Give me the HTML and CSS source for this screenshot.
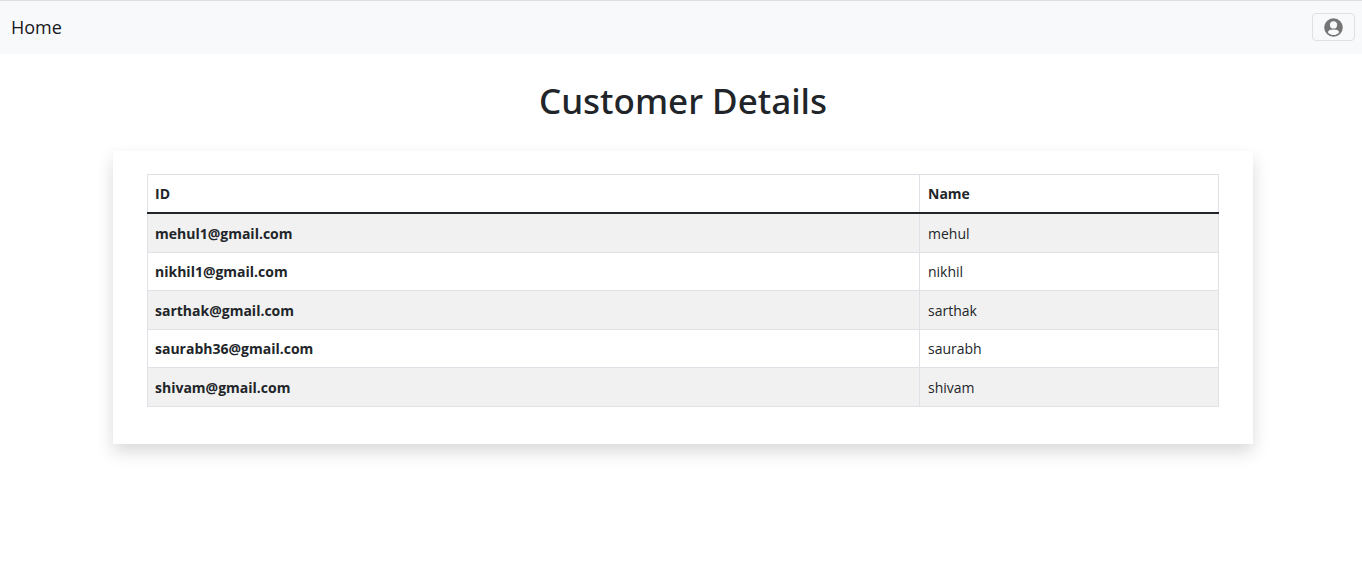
FILE: index.html
```html
<!DOCTYPE html>
<html lang="en">
<head>
  <meta charset="utf-8">
  <meta name="viewport" content="width=device-width, initial-scale=1">
  <title>Customer Details</title>
  <link rel="stylesheet" href="styles.css">
</head>
<body>
  <nav class="navbar">
    <a class="navbar-brand" href="#">Home</a>
    <button class="account-button" type="button" aria-label="Account">
      <svg class="account-icon" viewBox="0 0 20 20" aria-hidden="true">
        <circle cx="10" cy="10" r="9.800" fill="#757575"/>
        <circle cx="10" cy="7.300" r="3.800" fill="#f8f9fb"/>
        <path d="M4 15c.7-2.300 2.300-3 6-3s5.300.7 6 3c-1.400 1.900-3.500 3-6 3s-4.600-1.100-6-3z" fill="#f8f9fb"/>
      </svg>
    </button>
  </nav>
  <main class="page">
    <div class="container">
      <h1 class="title">Customer Details</h1>
      <section class="card">
        <table class="table">
          <thead>
            <tr><th scope="col">ID</th><th class="name-column" scope="col">Name</th></tr>
          </thead>
          <tbody>
            <tr><th scope="row">mehul1@gmail.com</th><td>mehul</td></tr>
            <tr><th scope="row">nikhil1@gmail.com</th><td>nikhil</td></tr>
            <tr><th scope="row">sarthak@gmail.com</th><td>sarthak</td></tr>
            <tr><th scope="row">saurabh36@gmail.com</th><td>saurabh</td></tr>
            <tr><th scope="row">shivam@gmail.com</th><td>shivam</td></tr>
          </tbody>
        </table>
      </section>
    </div>
  </main>
</body>
</html>
```
FILE: styles.css
```css
* {
  box-sizing: border-box;
}

body {
  min-height: 100vh;
  margin: 0;
  background: #fff;
  color: #212529;
  font-family: "Segoe UI", "Open Sans", "Noto Sans", sans-serif;
  font-size: 14px;
  line-height: 22px;
}

.navbar {
  display: flex;
  align-items: center;
  justify-content: space-between;
  padding: 12px 7px 13px 11px;
  border-top: 1px solid #dcdee1;
  background: #f8f9fb;
}

.navbar-brand {
  color: #16181b;
  font-size: 18px;
  line-height: 28px;
  text-decoration: none;
}

.account-button {
  display: flex;
  align-items: center;
  justify-content: center;
  width: 43px;
  height: 28px;
  padding: 0;
  border: 1px solid #dee0e3;
  border-radius: 4px;
  background: transparent;
}

.account-icon {
  width: 19px;
  height: 19px;
}

.page {
  padding: 24px 0 40px 4px;
}

.container {
  max-width: 1140px;
  margin: 0 auto;
}

.title {
  margin: 0 0 27px;
  font-family: "Segoe UI", "Noto Sans", sans-serif;
  font-size: 35px;
  font-weight: 500;
  line-height: 46px;
  text-align: center;
}

.card {
  padding: 23px 34px 37px;
  box-shadow: 0 8px 16px rgba(0, 0, 0, 0.15);
}

.table {
  width: 100%;
  border-collapse: collapse;
  table-layout: fixed;
}

.table th,
.table td {
  padding: 7px;
  border: 1px solid #dee2e6;
  text-align: left;
}

.table td,
.table .name-column {
  padding-left: 8px;
}

.name-column {
  width: 299px;
}

.table thead tr {
  height: 38px;
}

.table thead th {
  padding-bottom: 6px;
  border-bottom: 2px solid #212529;
}

.table tbody tr {
  height: 38px;
}

.table tbody tr:nth-child(odd) {
  height: 39px;
  background: #f1f1f1;
}

.table tbody tr:first-child {
  height: 40px;
}

.table tbody tr:nth-child(odd) th,
.table tbody tr:nth-child(odd) td {
  padding-top: 9px;
}
```
